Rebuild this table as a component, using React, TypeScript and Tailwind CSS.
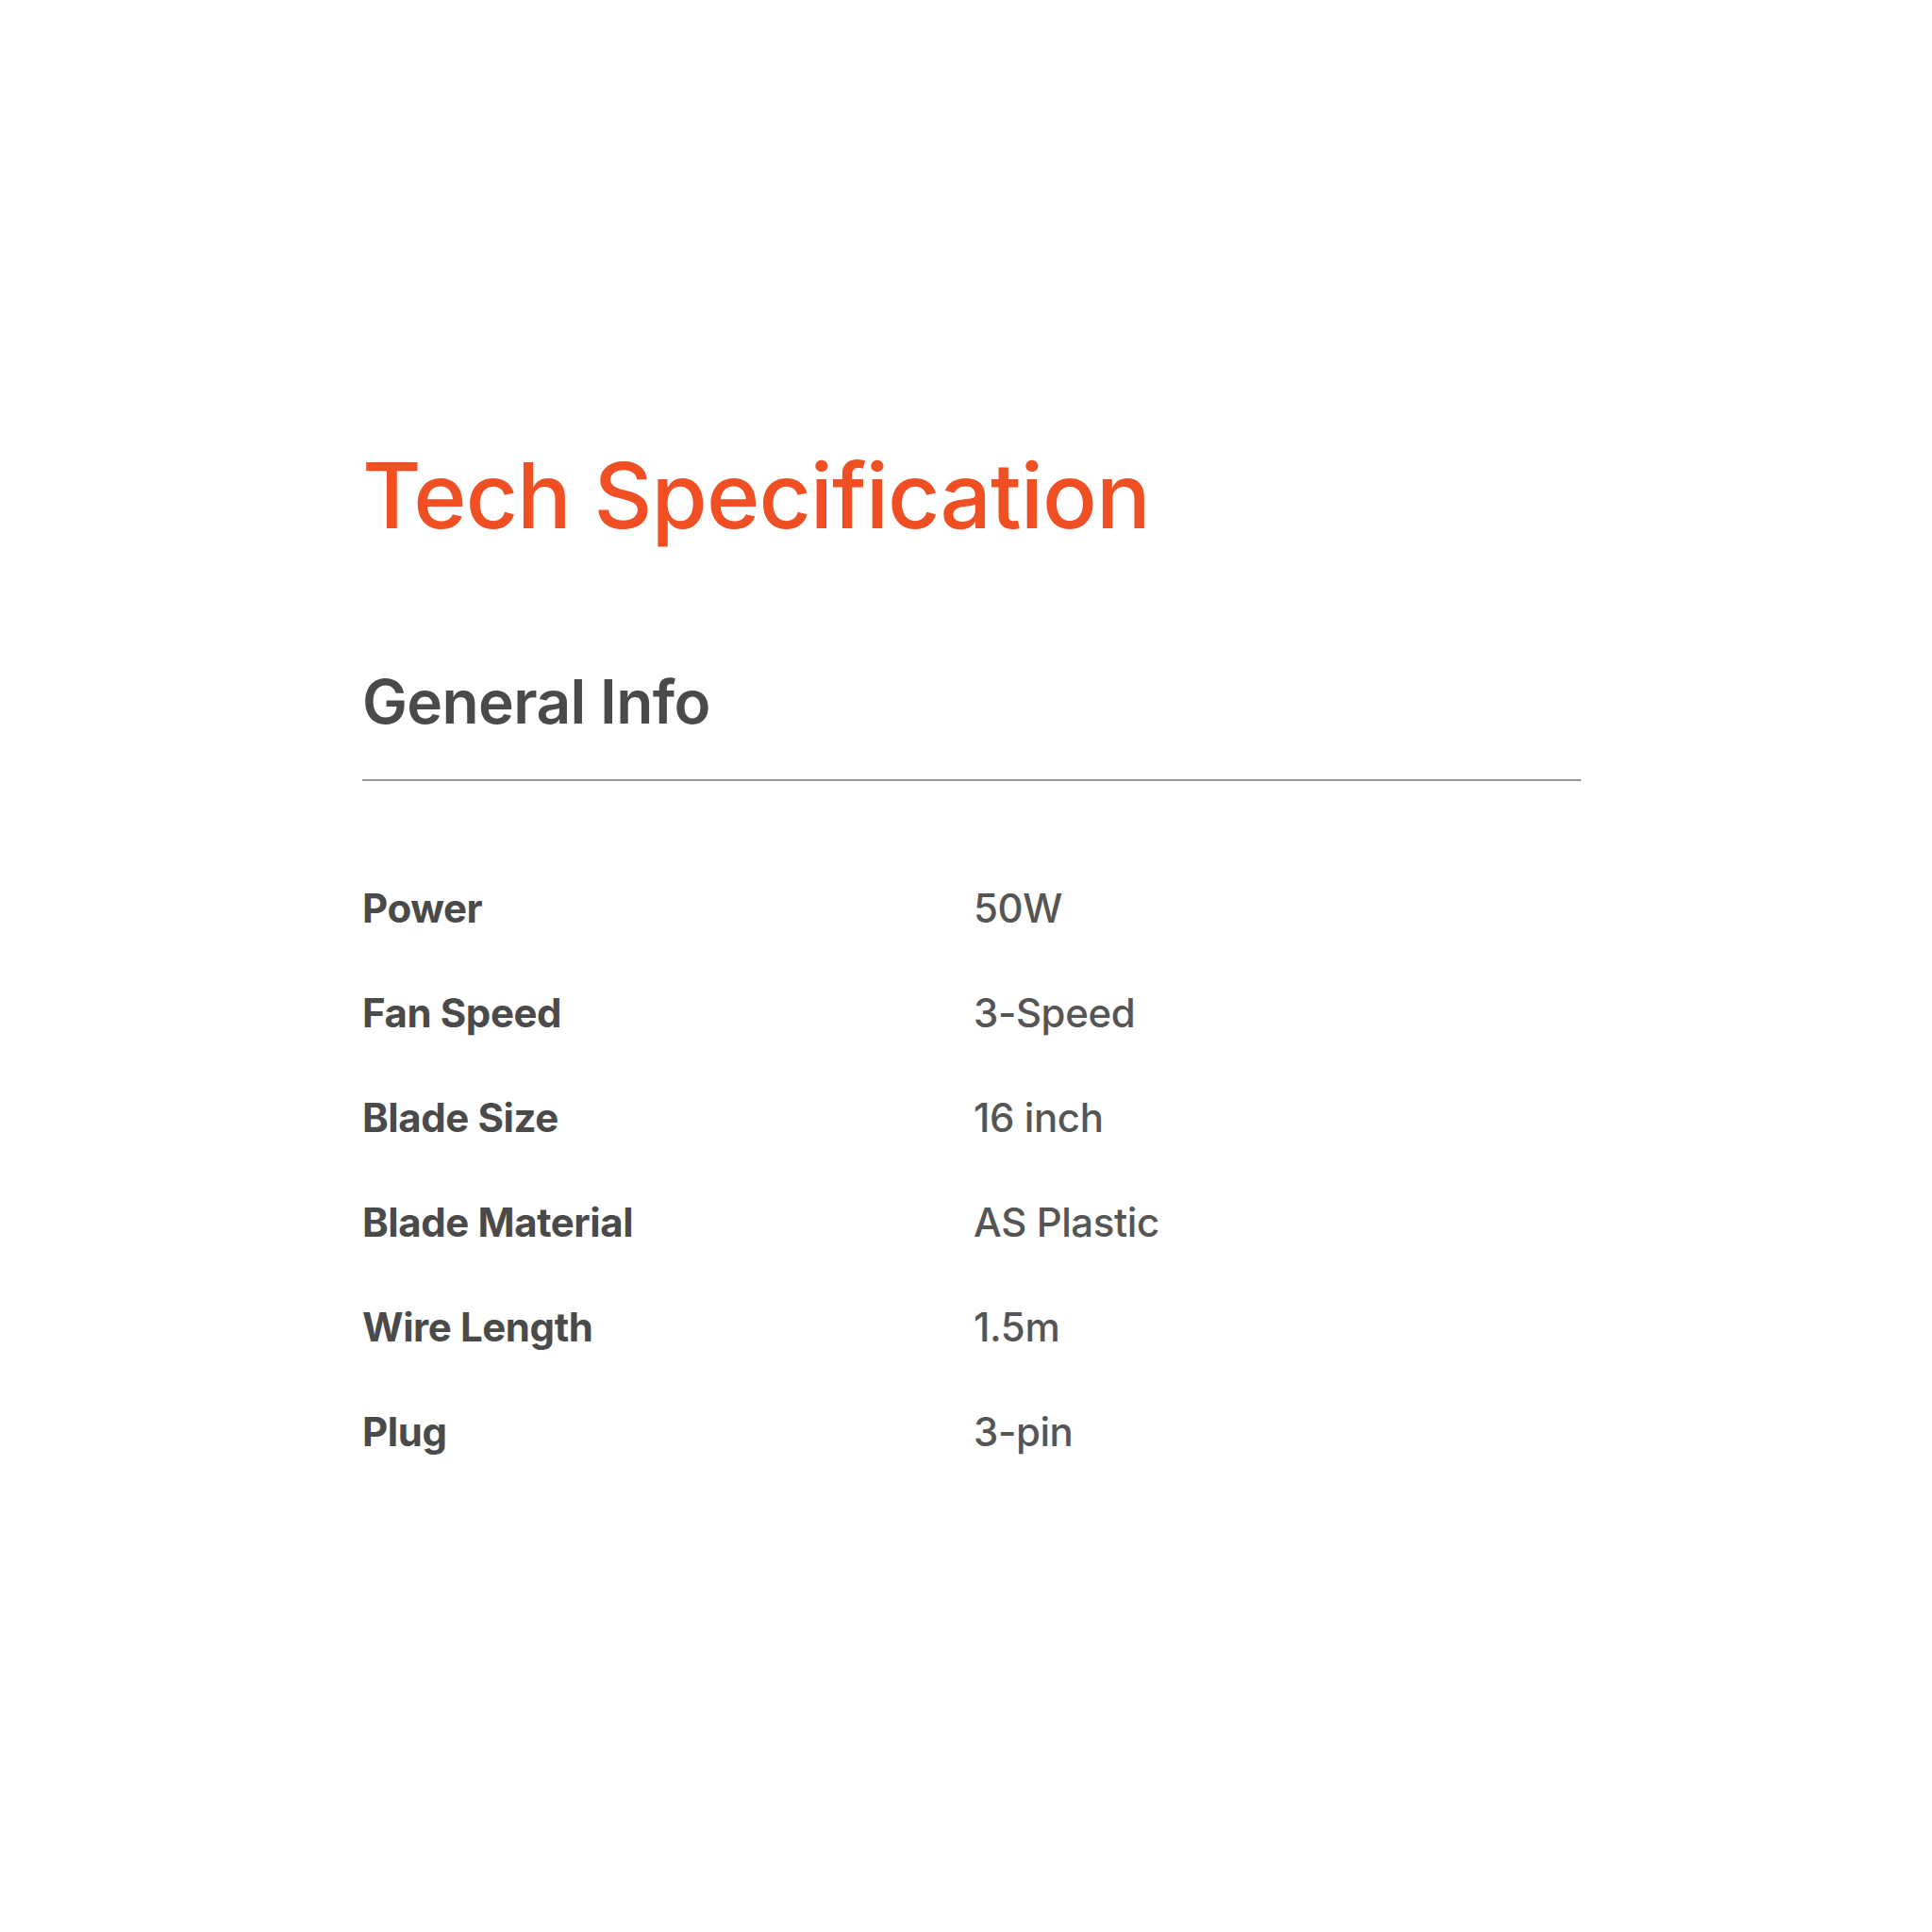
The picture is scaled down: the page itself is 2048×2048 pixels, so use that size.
import React from "react";

// data spesifikasi
const specs: { label: string; value: string }[] = [
  { label: "Power", value: "50W" },
  { label: "Fan Speed", value: "3-Speed" },
  { label: "Blade Size", value: "16 inch" },
  { label: "Blade Material", value: "AS Plastic" },
  { label: "Wire Length", value: "1.5m" },
  { label: "Plug", value: "3-pin" },
];

const App: React.FC = () => {
  return (
    <div className="min-h-screen w-full bg-white font-['Inter','Liberation_Sans',sans-serif]">
      <div className="ml-[384px] w-[1292px] pt-[477px] pb-[200px]">
        {/* Title */}
        <h1 className="text-[96px] leading-none font-medium tracking-[-0.01em] text-[#f04e23]">
          Tech Specification
        </h1>

        {/* Section */}
        <h2 className="mt-[139px] text-[64px] leading-none font-semibold tracking-[-0.01em] text-[#4a4a4a]">
          General Info
        </h2>
        <div className="mt-[50px] h-[2px] w-full bg-[#9a9a9a]" />

        {/* Rows */}
        <div className="mt-[79px] flex flex-col">
          {specs.map((s) => (
            <div key={s.label} className="grid grid-cols-[648px_1fr] h-[111px] items-center leading-[111px] text-[42px] tracking-[-0.01em]">
              <span className="font-bold text-[#4a4a4a]">{s.label}</span>
              <span className="font-medium text-[#555555]">{s.value}</span>
            </div>
          ))}
        </div>
      </div>
    </div>
  );
};

export default App;
